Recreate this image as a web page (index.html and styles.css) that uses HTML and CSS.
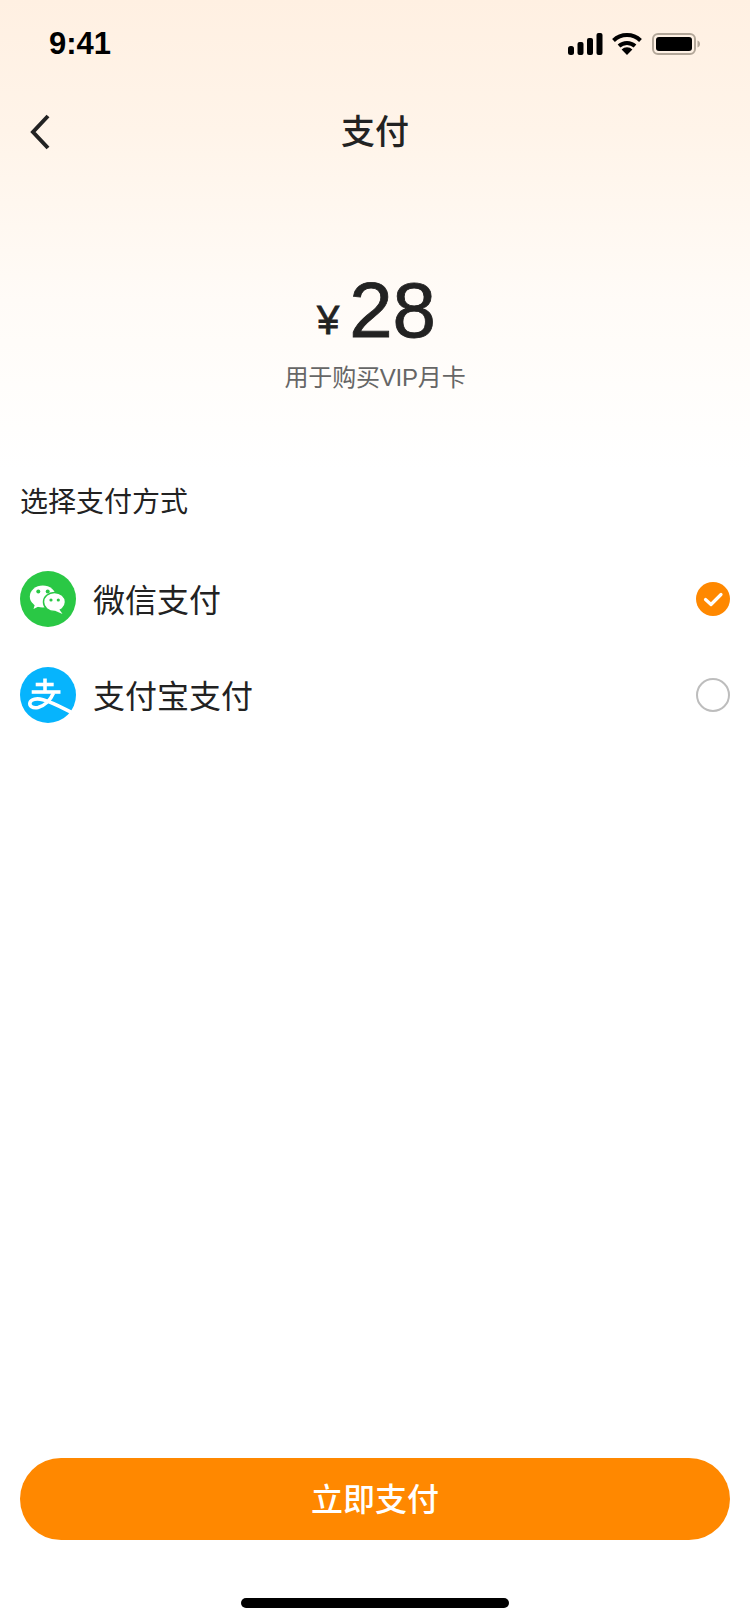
FILE: index.html

```html
<!DOCTYPE html>
<html lang="zh-CN">
<head>
  <meta charset="UTF-8" />
  <title>支付</title>
  <link rel="stylesheet" href="styles.css">
</head>
<body>
  <div class="page">
    <div class="status-bar">
      <span class="time">9:41</span>
      <div class="status-icons">
        <svg width="35" height="22" viewBox="0 0 35 22">
          <rect x="0" y="13" width="6" height="9" rx="2.5"/>
          <rect x="9.500" y="9" width="6" height="13" rx="2"/>
          <rect x="19" y="5" width="6" height="17" rx="2"/>
          <rect x="28.500" y="0" width="6" height="22" rx="2"/>
        </svg>
        <svg width="30" height="22" viewBox="0 0 30 22">
          <path d="M1.500 7.500a19.500 19.500 0 0 1 27 0" class="wifi-line"/>
          <path d="M7 13a12 12 0 0 1 16 0" class="wifi-line"/>
          <path d="M9.600 16.400L15 22l5.400-5.600a8 8 0 0 0-10.800 0z"/>
        </svg>
        <svg width="48" height="22" viewBox="0 0 48 22">
          <rect x="1" y="1" width="42" height="20" rx="5" class="battery-case"/>
          <rect x="4" y="4" width="36" height="14" rx="3"/>
          <path d="M45.500 7.500c1.500.4 2.500 1.800 2.500 3.500s-1 3.100-2.500 3.500z" class="battery-cap"/>
        </svg>
      </div>
    </div>

    <div class="nav-bar">
      <svg class="back" width="20" height="36" viewBox="0 0 20 36">
        <path d="M18 2L3 18l15 16"/>
      </svg>
      <span class="nav-title">支付</span>
    </div>

    <div class="amount-block">
      <div class="amount"><span class="currency">¥</span><span class="value">28</span></div>
      <div class="amount-note">用于购买VIP月卡</div>
    </div>

    <div class="section-title">选择支付方式</div>

    <div class="methods">
      <div class="method">
        <svg class="method-icon" width="56" height="56" viewBox="0 0 56 56">
          <circle cx="28" cy="28" r="28" fill="#2ac845"/>
          <ellipse cx="22.800" cy="25.500" rx="13" ry="11" fill="#fff"/>
          <path d="M15 33l-1.500 5 7-3.500z" fill="#fff"/>
          <ellipse cx="34.500" cy="31" rx="11" ry="9.500" fill="#fff" stroke="#2ac845" stroke-width="1.500"/>
          <path d="M39 38l3.500 5-8-3.500z" fill="#fff"/>
          <circle cx="18.300" cy="20.500" r="2" fill="#2ac845"/>
          <circle cx="27.700" cy="20.500" r="2" fill="#2ac845"/>
          <circle cx="31" cy="29" r="1.600" fill="#2ac845"/>
          <circle cx="38.300" cy="29" r="1.600" fill="#2ac845"/>
        </svg>
        <span class="method-name">微信支付</span>
        <svg class="radio" width="34" height="34" viewBox="0 0 34 34">
          <circle cx="17" cy="17" r="17" fill="#ff8800"/>
          <path d="M9.500 17.500l5.500 5 10-10" fill="none" stroke="#fff" stroke-width="3.200" stroke-linecap="round" stroke-linejoin="round"/>
        </svg>
      </div>
      <div class="method">
        <svg class="method-icon" width="56" height="56" viewBox="0 0 56 56">
          <circle cx="28" cy="28" r="28" fill="#06b4fd"/>
          <g fill="none" stroke="#fff" stroke-width="3.600">
            <path d="M15.700 17.500h18"/>
            <path d="M25 11.500v13"/>
            <path d="M11.700 25h28.800"/>
            <path d="M33.500 26c-3 7-9 13-15.500 14.500-5.500 1-9-1.500-8-5 1-3.300 6.500-4.500 13-2.800 10 2.800 19 8 30 13.300"/>
          </g>
        </svg>
        <span class="method-name">支付宝支付</span>
        <svg class="radio" width="34" height="34" viewBox="0 0 34 34">
          <circle cx="17" cy="17" r="16" fill="none" stroke="#bdbdbd" stroke-width="2"/>
        </svg>
      </div>
    </div>

    <button class="pay-btn">立即支付</button>
    <div class="home-bar"></div>
  </div>
</body>
</html>
```

FILE: styles.css

```css
* {
  box-sizing: border-box;
}
body {
  margin: 0;
  background: #fff;
  font-family: "Liberation Sans", "Noto Sans CJK SC", sans-serif;
  color: #222;
}
.page {
  width: 750px;
  height: 1624px;
  display: flex;
  flex-direction: column;
  background: linear-gradient(180deg, #fff0e2 0, #fff4e9 130px, #fffbf7 300px, #fff 470px);
}
.status-bar {
  height: 88px;
  padding: 33px 50px 0 49px;
  display: flex;
  justify-content: space-between;
  align-items: flex-start;
}
.time {
  font-size: 31px;
  line-height: 22px;
  font-weight: 700;
  color: #000;
}
.status-icons {
  display: flex;
  gap: 9px;
}
.status-icons svg:last-child {
  margin-left: 1px;
}
.wifi-line {
  fill: none;
  stroke: #000;
  stroke-width: 4;
}
.battery-case {
  fill: none;
  stroke: #b3a799;
  stroke-width: 2;
}
.battery-cap {
  fill: #b3a799;
}
.nav-bar {
  height: 88px;
  position: relative;
  display: flex;
  align-items: center;
  justify-content: center;
}
.back {
  position: absolute;
  left: 30px;
  top: 26px;
}
.back path {
  fill: none;
  stroke: #222;
  stroke-width: 4;
}
.nav-title {
  font-size: 34px;
  font-weight: 500;
  padding-bottom: 5px;
}
.amount-block {
  margin-top: 92px;
  display: flex;
  flex-direction: column;
  align-items: center;
}
.amount {
  display: flex;
  align-items: baseline;
  gap: 10px;
  height: 84px;
  padding-left: 3px;
  line-height: 84px;
}
.currency {
  font-size: 40px;
  -webkit-text-stroke: 0.8px #222;
  transform: translateY(-3px);
}
.value {
  font-size: 78px;
  -webkit-text-stroke: 0.8px #222;
}
.amount-note {
  margin-top: 9px;
  font-size: 24px;
  line-height: 34px;
  letter-spacing: -0.2px;
  color: #666;
}
.section-title {
  margin-top: 88px;
  padding-left: 20px;
  font-size: 28px;
  line-height: 40px;
}
.methods {
  margin-top: 48px;
  padding: 0 20px;
  display: flex;
  flex-direction: column;
  gap: 40px;
}
.method {
  display: flex;
  align-items: center;
  height: 56px;
}
.method-name {
  margin-left: 17px;
  padding-bottom: 3px;
  font-size: 32px;
  flex: 1;
}
.pay-btn {
  margin: auto 20px 0;
  height: 82px;
  padding: 0 0 4px;
  border: none;
  border-radius: 41px;
  background: #ff8800;
  color: #fff;
  font-family: inherit;
  font-size: 32px;
  font-weight: 500;
}
.home-bar {
  width: 268px;
  height: 10px;
  margin: 58px auto 16px;
  border-radius: 5px;
  background: #000;
}
```
